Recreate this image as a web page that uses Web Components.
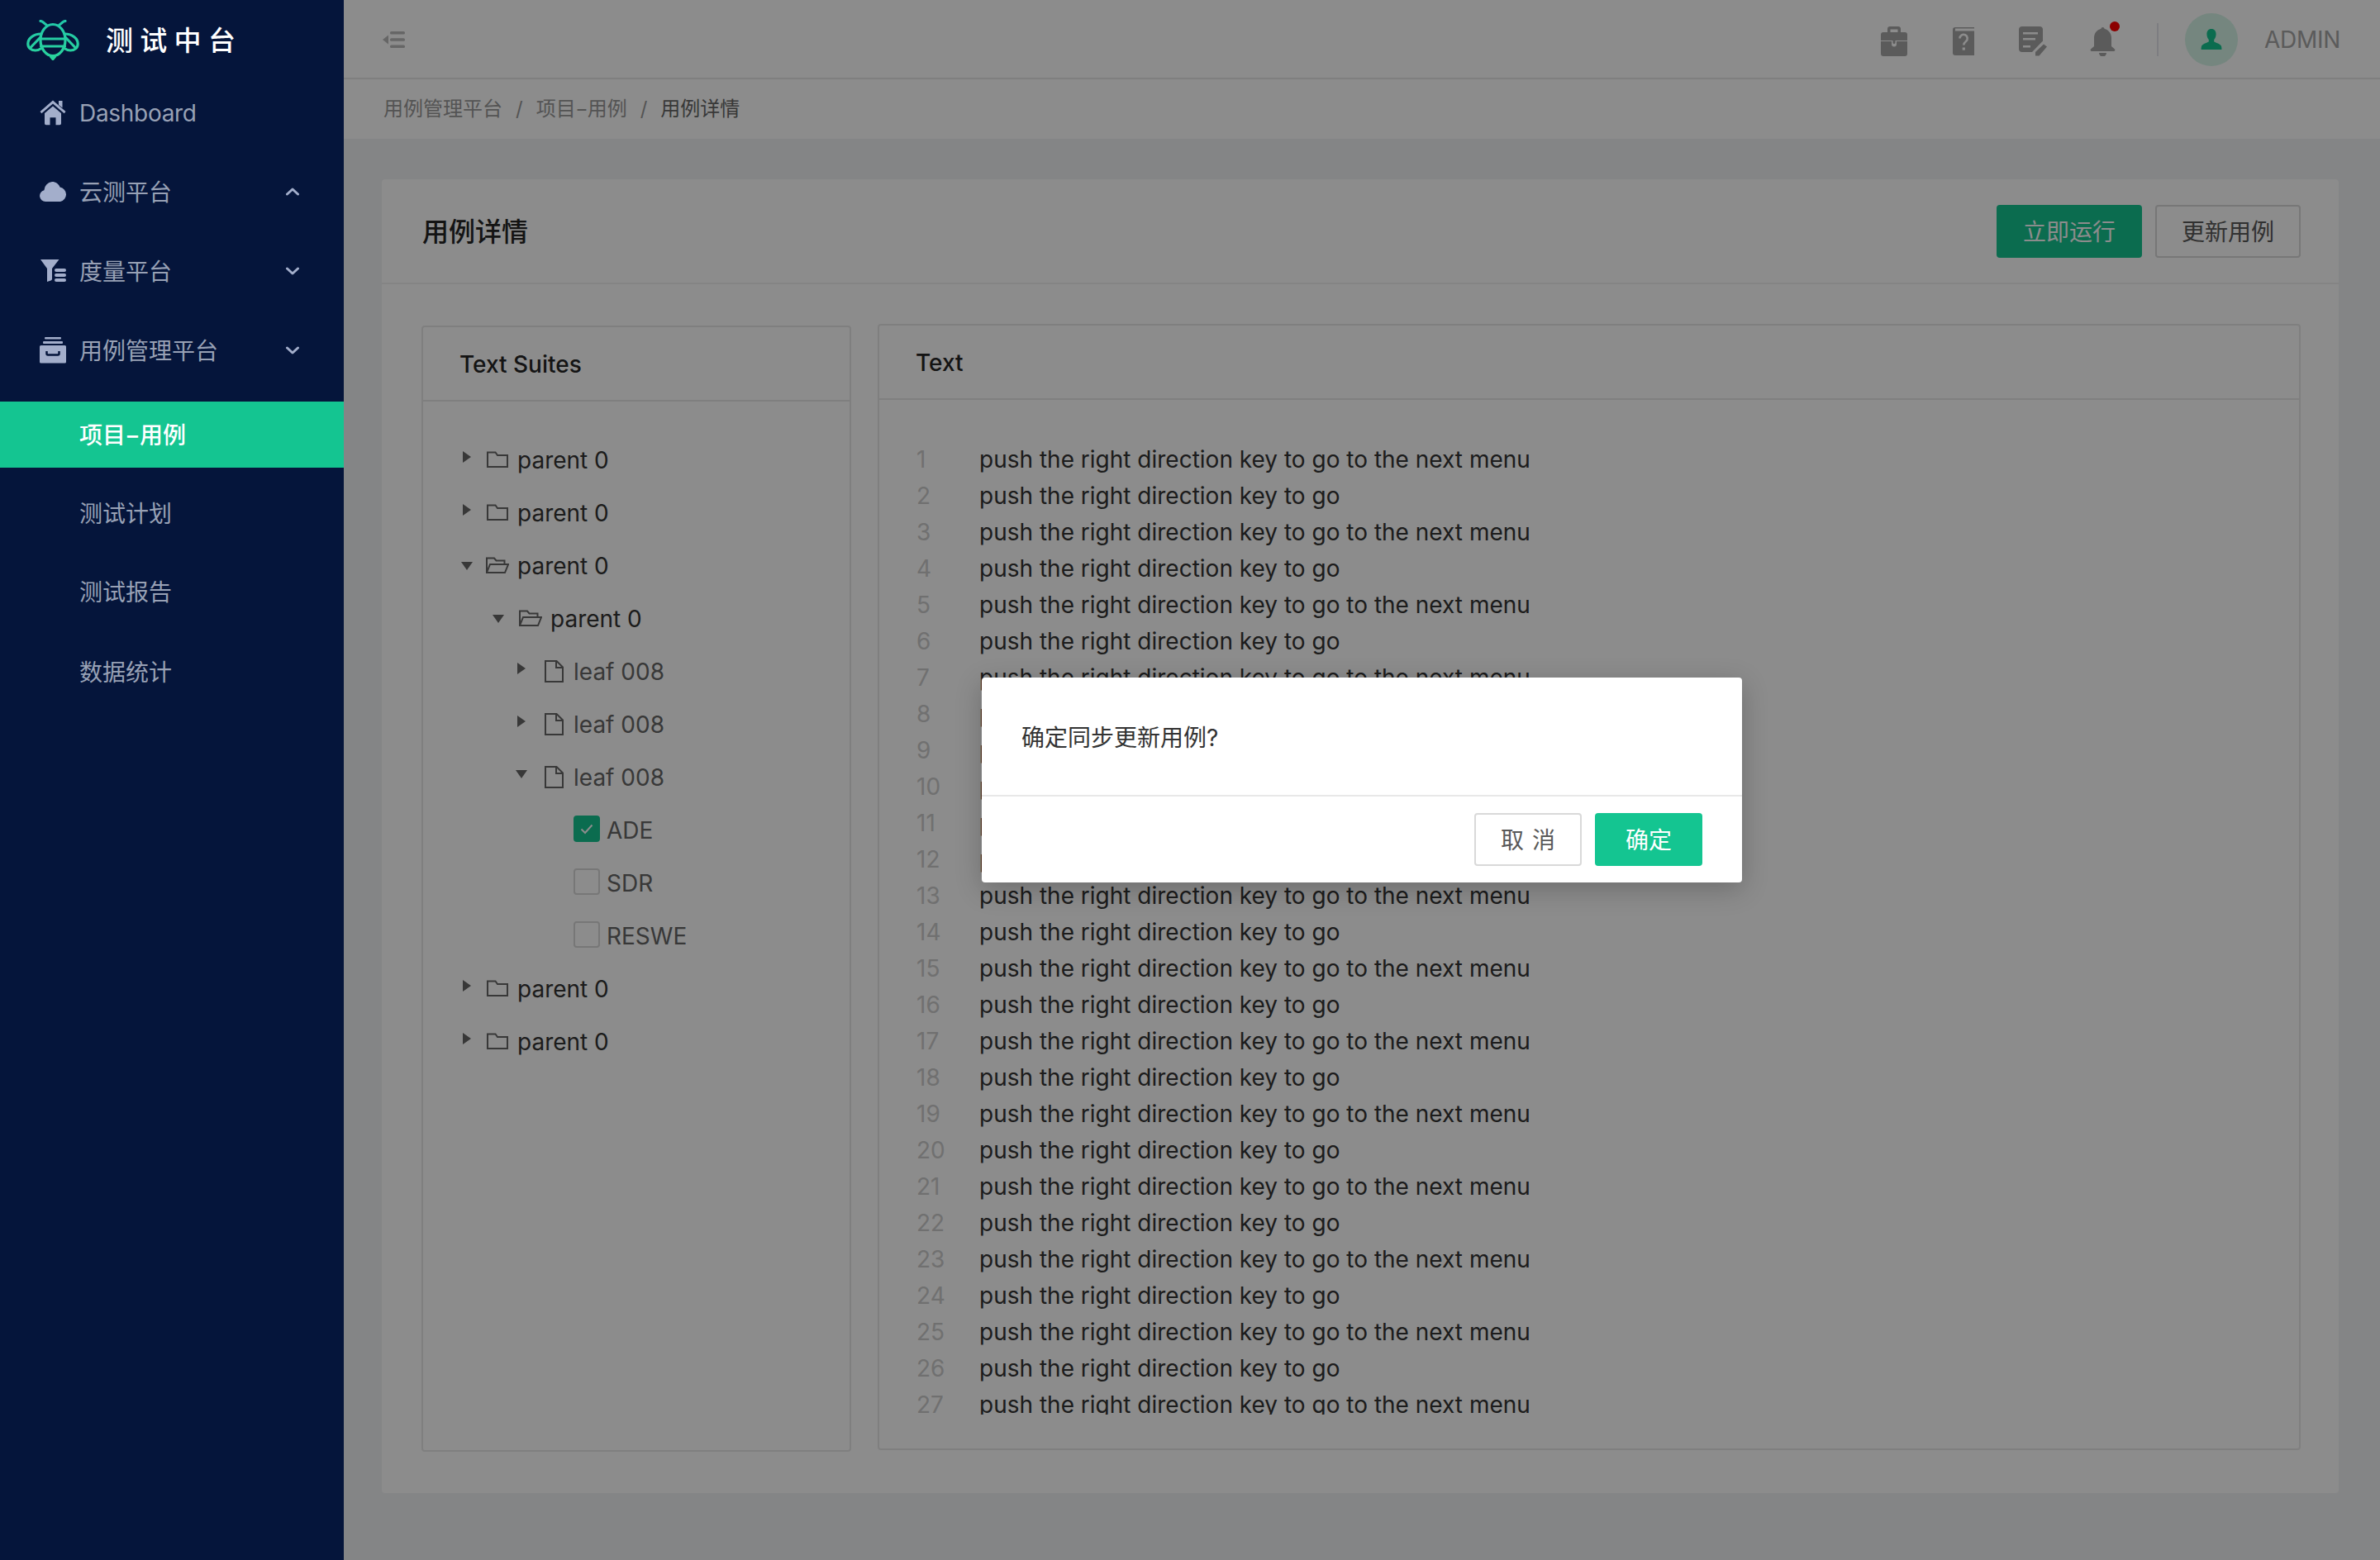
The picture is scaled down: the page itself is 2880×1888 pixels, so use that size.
<!DOCTYPE html>
<html lang="zh-CN">
<head>
<meta charset="utf-8">
<title>用例详情</title>
<style>
html,body{margin:0;padding:0;width:2880px;height:1888px;overflow:hidden;background:#f0f2f5;font-family:Inter,"Noto Sans CJK SC",sans-serif;font-size:28px;color:#333}
.dash{display:inline-block;width:17px;text-align:center;transform:scaleX(1.45)}
</style>
</head>
<body>
<app-shell>
  <side-bar slot="side">
    <nav-item icon="home" style="margin-bottom:16px">Dashboard</nav-item>
    <nav-item icon="cloud" chevron="up" style="margin-bottom:16px">云测平台</nav-item>
    <nav-item icon="filter" chevron="down" style="margin-bottom:16px">度量平台</nav-item>
    <nav-item icon="archive" chevron="down" style="margin-bottom:22px">用例管理平台</nav-item>
    <nav-item active style="margin-bottom:15px">项目<span class="dash">-</span>用例</nav-item>
    <nav-item style="margin-bottom:15px">测试计划</nav-item>
    <nav-item style="margin-bottom:17px">测试报告</nav-item>
    <nav-item>数据统计</nav-item>
  </side-bar>
  <top-bar slot="top"></top-bar>
  <bread-crumb slot="top"></bread-crumb>
  <case-card>
    <suite-panel slot="left">
      <tree-row kind="folder" arrow="right">parent 0</tree-row>
      <tree-row kind="folder" arrow="right">parent 0</tree-row>
      <tree-row kind="open" arrow="down">parent 0</tree-row>
      <tree-row kind="open" arrow="down" level="1">parent 0</tree-row>
      <tree-row kind="file" arrow="right" level="2">leaf 008</tree-row>
      <tree-row kind="file" arrow="right" level="2">leaf 008</tree-row>
      <tree-row kind="file" arrow="down" level="2">leaf 008</tree-row>
      <tree-row kind="check" checked>ADE</tree-row>
      <tree-row kind="check">SDR</tree-row>
      <tree-row kind="check">RESWE</tree-row>
      <tree-row kind="folder" arrow="right">parent 0</tree-row>
      <tree-row kind="folder" arrow="right">parent 0</tree-row>
    </suite-panel>
    <code-panel slot="right"></code-panel>
  </case-card>
  <confirm-modal slot="overlay"></confirm-modal>
</app-shell>
<script>
const ICONS={
 home:'<svg width="32" height="32" viewBox="0 0 32 32" fill="#a3aecb"><path d="M23 2h4.500v8.500L23 7z"/><path d="M16 1.500L31.500 15l-1.800 2.200L16 5.500 2.300 17.200.5 15z"/><path d="M16 8.500l10 8.500v12.500a1.800 1.800 0 0 1-1.800 1.800H19.500v-9h-7v9H7.800A1.800 1.800 0 0 1 6 29.500V17z"/></svg>',
 cloud:'<svg width="32" height="26" viewBox="0 0 32 26" fill="#a3aecb"><path d="M7 25a7 7 0 0 1-1.600-13.800A11 11 0 0 1 15 1c4.500 0 8 2.500 9.500 6.500A9 9 0 0 1 32 16a9 9 0 0 1-7 9z"/></svg>',
 filter:'<svg width="32" height="28" viewBox="0 0 32 28" fill="#a3aecb"><path d="M1 0h22.500l-8.500 11v12.500a2 2 0 0 1-1.400 1.900L9 27V11z"/><rect x="18" y="11" width="14" height="4" rx="2"/><rect x="18" y="17" width="14" height="4" rx="2"/><rect x="18" y="23" width="14" height="4" rx="2"/></svg>',
 archive:'<svg width="32" height="32" viewBox="0 0 32 32" fill="#a3aecb"><rect x="6" y="0" width="20" height="2.500" rx="1"/><rect x="4" y="5" width="24" height="3" rx="1"/><path d="M1.500 10h29a1.500 1.500 0 0 1 1.500 1.500V30a1.500 1.500 0 0 1-1.500 1.500h-29A1.500 1.500 0 0 1 0 30V11.500A1.500 1.500 0 0 1 1.500 10z"/><path d="M8.500 17v3a1.500 1.500 0 0 0 1.500 1.500h12a1.500 1.500 0 0 0 1.500-1.500v-3" fill="none" stroke="#05153b" stroke-width="2.500"/></svg>',
 case:'<svg width="32" height="36" viewBox="0 0 32 36" fill="#a6a6a6"><path d="M11 0h10a3 3 0 0 1 3 3v4h-3.500V3.500h-9V7H8V3a3 3 0 0 1 3-3z"/><path d="M3 7h26a3 3 0 0 1 3 3v7H0v-7a3 3 0 0 1 3-3z"/><path d="M0 18h13v3.500a3 3 0 0 0 6 0V18h13v15a3 3 0 0 1-3 3H3a3 3 0 0 1-3-3z"/><rect x="14.500" y="15" width="3" height="6" rx="1.500"/></svg>',
 help:'<svg width="26" height="34" viewBox="0 0 26 34" fill="#a6a6a6"><path d="M3 0h23v1.500H3z"/><path d="M3 4.500h23V34H3a3 3 0 0 1-3-3V3a3 3 0 0 1 3-3v3a1.500 1.500 0 0 0 0 1.500z"/><path d="M8.500 13.500a4.600 4.600 0 1 1 7.500 3.500c-1.800 1.500-2.700 2.300-2.700 4.500" fill="none" stroke="#fff" stroke-width="2.600"/><rect x="11.700" y="24.500" width="3.200" height="3.200" fill="#fff"/></svg>',
 note:'<svg width="34" height="36" viewBox="0 0 34 36" fill="#a6a6a6"><path d="M4 0h21a4 4 0 0 1 4 4v13.500L16 31H4a4 4 0 0 1-4-4V4a4 4 0 0 1 4-4z"/><rect x="5" y="7" width="18" height="2.500" fill="#fff"/><rect x="5" y="14" width="15" height="2.500" fill="#fff"/><rect x="5" y="23" width="9" height="2.500" fill="#fff"/><path d="M30 21.500l4 3-9.500 11H20v-4.500z"/></svg>',
 bell:'<svg width="31" height="35" viewBox="0 0 31 35" fill="#a6a6a6"><path d="M15.500 0c1.200 0 2 .8 2.200 1.900C23 3.200 26 7.500 26 13v10l4 3.500a1.500 1.500 0 0 1-1 2.500H2a1.500 1.500 0 0 1-1-2.500L5 23V13C5 7.500 8 3.200 13.300 1.900 13.500.8 14.300 0 15.500 0z"/><path d="M11 31h9a4.500 4.500 0 0 1-9 0z"/></svg>',
 person:'<svg width="26" height="26" viewBox="0 0 26 26" fill="#14c591"><path d="M13 0c3.600 0 5.600 2.600 5.600 6.200 0 3-1.100 5.300-2.400 6.800v2.500c3.200 1.700 7.800 2.600 8.800 5.500.4 1.300.4 2.600.4 4H.6c0-1.400 0-2.700.4-4 1-2.900 5.600-3.800 8.800-5.500V13c-1.300-1.500-2.400-3.800-2.400-6.800C7.400 2.600 9.400 0 13 0z"/></svg>'
};
function define(name,html,extra){
  const t=document.createElement('template');t.innerHTML=html;
  customElements.define(name,class extends HTMLElement{
    constructor(){super();this.attachShadow({mode:'open'}).appendChild(t.content.cloneNode(true));}
    connectedCallback(){if(extra)extra(this,this.shadowRoot);}
  });
}
define('app-shell',`<style>
:host{display:flex;width:2880px;height:1888px;position:relative;overflow:hidden;background:#f0f2f5}
.main{flex:1;min-width:0;display:flex;flex-direction:column;position:relative}
.content{flex:1;padding:49px 50px 0 46px;min-height:0}
.mask{position:absolute;inset:0;background:rgba(0,0,0,.45);display:flex;align-items:center;justify-content:center}
</style>
<slot name="side"></slot>
<div class="main"><slot name="top"></slot><div class="content"><slot></slot></div>
<div class="mask"><slot name="overlay"></slot></div></div>`);

define('side-bar',`<style>
:host{display:block;flex:none;width:416px;height:1888px;background:#05153b;position:relative;z-index:2}
.logo{display:flex;align-items:center;height:96px;padding:1px 0 0 32px;box-sizing:border-box}
.name{margin-left:32px;margin-top:0;font-size:33px;letter-spacing:8.300px;color:#fff;font-weight:500;line-height:44px;white-space:nowrap}
svg{display:block;flex:none}
</style>
<div class="logo">
<svg width="64" height="49" viewBox="0 0 64 49" fill="none" stroke="url(#g)" stroke-width="3.200" stroke-linecap="round" stroke-linejoin="round">
<defs><linearGradient id="g" x1="0" y1="0" x2="0" y2="49" gradientUnits="userSpaceOnUse"><stop offset="0" stop-color="#21c7a8"/><stop offset="1" stop-color="#2ad39c"/></linearGradient></defs>
<path d="M17 1.500c3 0 4 2.500 7 4.500M47 1.500c-3 0-4 2.500-7 4.500"/>
<ellipse cx="32" cy="24.500" rx="15" ry="19"/>
<path d="M17.500 23h29M17.500 32h29"/>
<path d="M18 17C8 17 1.800 23 1.800 29c0 5 4 8 9 8 3 0 6-1.500 8.200-3"/>
<path d="M46 17c10 0 16.200 6 16.200 12 0 5-4 8-9 8-3 0-6-1.500-8.200-3"/>
<path d="M5 33.500L17 21M59 33.500L47 21"/>
<path d="M29.500 44.500L32 47.500l2.500-3z" fill="#2ad39c"/>
</svg>
<span class="name">测试中台</span></div>
<slot></slot>`);

define('nav-item',`<style>
:host{display:flex;align-items:center;height:80px;padding-left:48px;padding-right:54px;box-sizing:border-box;color:#98a1b5;font-size:28px;line-height:40px;white-space:nowrap}
:host([active]){background:#14c591;color:#fff;font-weight:500}
.ic{width:32px;height:32px;display:flex;align-items:center;justify-content:center;margin-right:16px;flex:none}
.tx{flex:1;margin-top:2px;letter-spacing:0}
svg{display:block}
</style><span class="ic"></span><span class="tx"><slot></slot></span><span class="ch"></span>`,(h,s)=>{
  const ic=s.querySelector('.ic');const n=h.getAttribute('icon');if(n)ic.innerHTML=ICONS[n];
  if(n==='home')s.querySelector('.tx').style.letterSpacing='-.3px';
  const c=h.getAttribute('chevron');
  if(c){s.querySelector('.ch').innerHTML=`<svg width="16" height="10" viewBox="0 0 16 10" fill="none" stroke="#a3aecb" stroke-width="3" stroke-linecap="round" stroke-linejoin="round"><path d="${c==='up'?'M1.500 8L8 2l6.500 6':'M1.500 2L8 8l6.500-6'}"/></svg>`;}
});

define('top-bar',`<style>
:host{display:flex;align-items:center;height:92px;padding:2px 48px 0 47px;background:#fff;border-bottom:2px solid #e8e8e8;color:#a6a6a6}
.sp{flex:1}
.slot{width:84px;display:flex;justify-content:center;align-items:center;position:relative;height:36px;margin-top:4px}
.dot{position:absolute;left:51px;top:-6px;width:12px;height:12px;border-radius:50%;background:#f00}
.div{width:2px;height:40px;background:#e4e4ec;margin-left:24px}
.av{width:64px;height:64px;border-radius:50%;background:#d5f4e7;display:flex;align-items:center;justify-content:center;margin-left:32px;margin-right:32px}
.who{font-size:28px;line-height:40px;color:#a6a6a6;letter-spacing:-.3px}
svg{display:block}
</style>
<svg width="27" height="20" viewBox="0 0 27 20" fill="#bbb"><path d="M0 10l7-5.500v11z"/><rect x="9" y="0" width="18" height="3.500" rx="1.500"/><rect x="9" y="8.200" width="18" height="3.500" rx="1.500"/><rect x="9" y="16.500" width="18" height="3.500" rx="1.500"/></svg>
<span class="sp"></span>
<span class="slot" data-i="case"></span><span class="slot" data-i="help"></span><span class="slot" data-i="note"></span><span class="slot" data-i="bell"><i class="dot"></i></span>
<span class="div"></span>
<span class="av" data-a="1"></span><span class="who">ADMIN</span>`,(h,s)=>{
  s.querySelectorAll('[data-i]').forEach(e=>e.insertAdjacentHTML('afterbegin',ICONS[e.dataset.i]));
  s.querySelector('.av').innerHTML=ICONS.person;
});

define('bread-crumb',`<style>
:host{display:flex;align-items:center;height:72px;background:#fff;padding-left:48px;font-size:24px;line-height:36px;color:#999;white-space:nowrap}
.sep{margin:0 16px;color:#999}
.cur{color:#666}
.dash{display:inline-block;width:14px;text-align:center;transform:scaleX(1.4)}
</style><span>用例管理平台</span><span class="sep">/</span><span>项目<span class="dash">-</span>用例</span><span class="sep">/</span><span class="cur">用例详情</span>`);

define('case-card',`<style>
:host{display:block;height:1590px;background:#fff;border-radius:4px;box-sizing:border-box}
.hd{display:flex;align-items:center;height:125px;border-bottom:2px solid #f0f0f0;padding:0 46px 0 49px}
.t{flex:1;font-size:32px;font-weight:500;color:#262626;line-height:44px;margin-top:2px}
.btn{width:176px;height:64px;box-sizing:border-box;border-radius:4px;display:flex;align-items:center;justify-content:center;font-size:28px;line-height:40px;padding-top:2px}
.p{background:#14c591;color:#fff;margin-right:16px}
.d{border:2px solid #d9d9d9;color:#595959}
.bd{display:flex;gap:32px;padding:48px 46px 0 48px}
</style>
<div class="hd"><span class="t">用例详情</span><span class="btn p">立即运行</span><span class="btn d">更新用例</span></div>
<div class="bd"><slot name="left"></slot><slot name="right"></slot></div>`);

define('suite-panel',`<style>
:host{display:block;width:520px;height:1363px;margin-top:2px;box-sizing:border-box;border:2px solid #e8e8e8;border-radius:4px;flex:none}
.h{height:90px;box-sizing:border-box;border-bottom:2px solid #e8e8e8;display:flex;align-items:center;padding:2px 0 0 44px;font-size:28px;font-weight:500;color:#262626}
.b{padding-top:38px}
</style><div class="h">Text Suites</div><div class="b"><slot></slot></div>`);

define('tree-row',`<style>
:host{display:flex;align-items:center;height:64px;padding-left:36px;white-space:nowrap;font-size:28px;line-height:40px;color:#333}
.ar{width:34px;display:flex;justify-content:center;flex:none;margin-top:-6px}
.ic{width:40px;display:flex;justify-content:center;flex:none;margin-right:4px}
.tx{margin-top:1px}
.box{width:32px;height:32px;box-sizing:border-box;border:2px solid #d9d9d9;border-radius:4px;margin-left:146px;margin-right:8px;display:flex;align-items:center;justify-content:center;flex:none;margin-top:-2px}
:host([checked]) .box{background:#14c591;border-color:#14c591}
svg{display:block}
</style><span class="ar"></span><span class="ic"></span><span class="tx"><slot></slot></span>`,(h,s)=>{
  const lvl=+(h.getAttribute('level')||0),kind=h.getAttribute('kind'),a=h.getAttribute('arrow');
  const ar=s.querySelector('.ar'),ic=s.querySelector('.ic');
  if(kind==='check'){
    ar.remove();
    const b=document.createElement('span');b.className='box';
    if(h.hasAttribute('checked'))b.innerHTML='<svg width="16" height="13" viewBox="0 0 16 13" fill="none" stroke="#fff" stroke-width="2"><path d="M1.500 6.500L6 11l8.500-9.500"/></svg>';
    ic.replaceWith(b);h.style.color='#666';return;
  }
  h.style.paddingLeft=(36+[0,40,68][lvl])+'px';
  if(lvl){ar.style.marginLeft='-2px';ar.style.marginRight='2px';}
  if(lvl===2)h.style.color='#666';
  ar.innerHTML=a==='down'?'<svg width="14" height="10" viewBox="0 0 14 10" fill="#666"><path d="M0 0h14L7 10z"/></svg>':'<svg width="10" height="14" viewBox="0 0 10 14" fill="#666"><path d="M0 0l10 7-10 7z"/></svg>';
  if(a==='down'&&lvl<2)ar.style.marginTop='2px';
  ic.innerHTML={
   folder:'<svg width="26" height="20" viewBox="0 0 26 20" fill="none" stroke="#666" stroke-width="2"><path d="M1 19V1.500h9.500l2.500 3.500h12v14z"/></svg>',
   open:'<svg width="28" height="20" viewBox="0 0 28 20" fill="none" stroke="#666" stroke-width="2"><path d="M1 19V1.500h9l2.500 3h10V9"/><path d="M1 19l4-10h22l-4 10z"/></svg>',
   file:'<svg width="23" height="27" viewBox="0 0 23 27" fill="none" stroke="#666" stroke-width="2"><path d="M1 26V1h13.500L22 8.500V26z"/><path d="M14 1v8h8"/></svg>'
  }[kind];
});

define('code-panel',`<style>
:host{display:block;flex:1;min-width:0;height:1363px;box-sizing:border-box;border:2px solid #e8e8e8;border-radius:4px}
.h{height:90px;box-sizing:border-box;border-bottom:2px solid #e8e8e8;display:flex;align-items:center;padding:2px 0 0 44px;font-size:28px;font-weight:500;color:#262626}
.v{height:1228px;overflow:hidden;padding:50px 0 0 45px;box-sizing:border-box}
.l{display:flex;height:44px;align-items:center;line-height:44px;font-size:28px;white-space:nowrap;color:#333}
.n{width:76px;flex:none;color:#ccc}
</style><div class="h">Text</div><div class="v"></div>`,(h,s)=>{
  const v=s.querySelector('.v');let o='';
  for(let i=1;i<=27;i++)o+=`<div class="l"><span class="n">${i}</span><span>push the right direction key to go${i%2?' to the next menu':''}</span></div>`;
  v.innerHTML=o;
});

define('confirm-modal',`<style>
:host{display:block;width:920px;height:248px;background:#fff;border-radius:4px;box-shadow:0 8px 32px rgba(0,0,0,.22)}
.b{height:142px;display:flex;align-items:center;padding-left:48px;box-sizing:border-box;font-size:28px;color:#333}
.line{height:2px;background:#e8e8e8}
.f{display:flex;justify-content:flex-end;gap:16px;padding:20px 48px}
.btn{width:130px;height:64px;box-sizing:border-box;border-radius:4px;display:flex;align-items:center;justify-content:center;font-size:28px;line-height:40px;padding-top:1px}
.c{border:2px solid #d9d9d9;color:#595959;word-spacing:2px}
.o{background:#14c591;color:#fff}
</style><div class="b">确定同步更新用例?</div><div class="line"></div>
<div class="f"><span class="btn c">取 消</span><span class="btn o">确定</span></div>`);
</script>
</body>
</html>
